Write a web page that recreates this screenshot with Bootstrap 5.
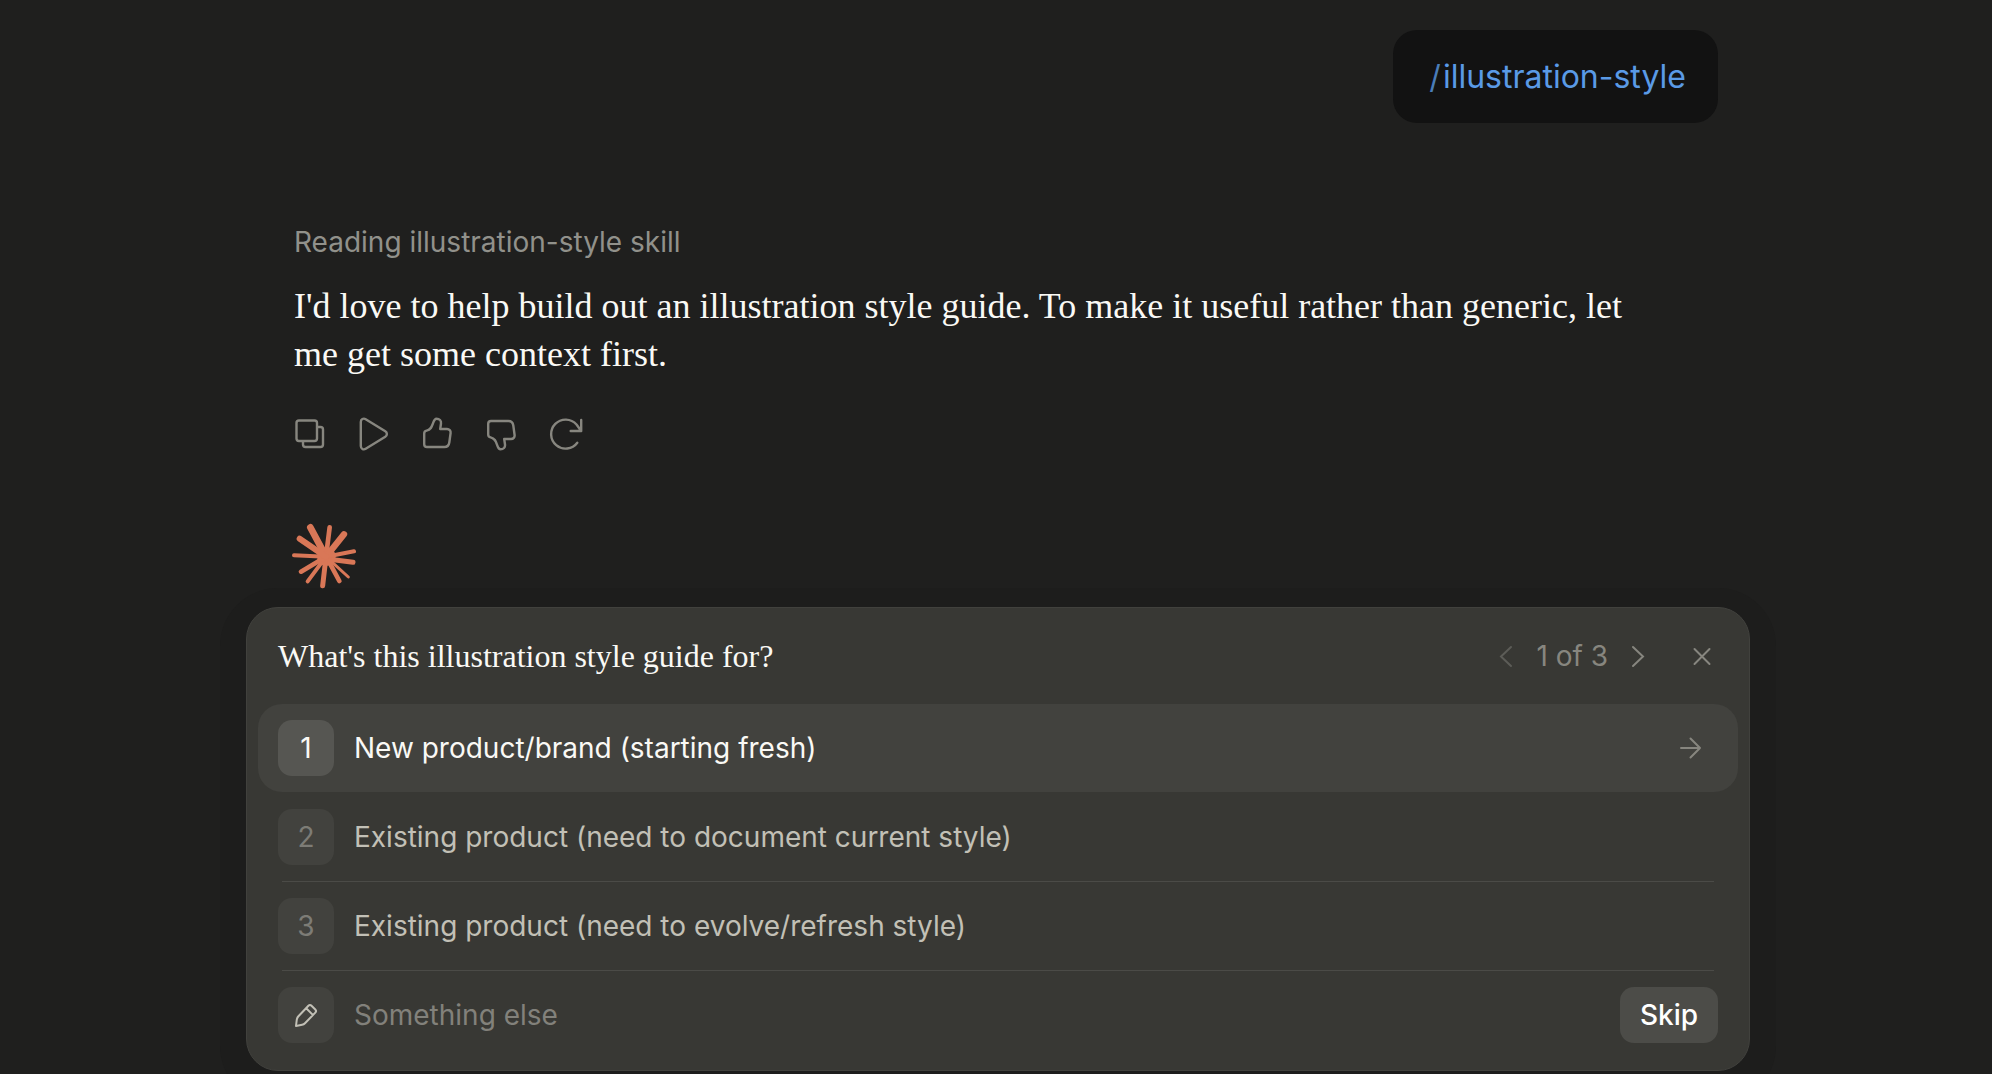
<!DOCTYPE html>
<html lang="en" data-bs-theme="dark">
<head>
<meta charset="utf-8">
<meta name="viewport" content="width=device-width, initial-scale=1">
<title>Illustration style</title>
<link href="https://cdn.jsdelivr.net/npm/bootstrap@5.3.0/dist/css/bootstrap.min.css" rel="stylesheet">
<style>
  body { background: #1f1f1e; font-family: Inter, "Liberation Sans", sans-serif; font-size: 28px; line-height: 40px; }
  .chat-page { padding: 30px 0 3px 4px; }
  .chat-column { max-width: 1504px; }
  .serif { font-family: "Liberation Serif", serif; color: #faf9f5; }
  .thread { padding: 0 32px; z-index: 1; }
  .bubble { background: #121212; border-radius: 24px; padding: 23px 32px 22px 36px; font-size: 32px; line-height: 48px; }
  .bubble a { color: #5a9ae6; }
  .bubble .slash { color: #4a7db9; margin-right: 2px; }
  .reply { padding: 0 64px 0 16px; margin-top: 99px; }
  .status { color: #91918b; margin-bottom: 20px; }
  .answer { font-size: 36px; line-height: 48px; }
  .tool { width: 64px; height: 64px; color: #87867f; }
  .tool svg { stroke-width: 2.4px; }
  .tool svg, .spark { display: block; }
  .spark { margin: 57px 0 0 12px; color: #d97757; }
  .ask { background: #383834; border: 1px solid #41413d; border-radius: 32px; padding: 0 11px 11px; box-shadow: 0 7px 0 26px #1d1d1c; }
  .ask-head { height: 96px; padding: 0 16px 0 20px; }
  .ask-title { font-size: 32px; line-height: 40px; }
  .pager { color: #87867f; }
  .pager-count { padding: 0 10px; }
  .bare { border: 0; padding: 0; background: none; color: #87867f; width: 40px; height: 40px; }
  .bare:disabled { border: 0; color: #5c5c57; opacity: 1; }
  .option { height: 88px; padding: 0 20px; border: 0; border-radius: 24px; background: none; color: #c2c0b6; text-align: left; gap: 20px; }
  .option.picked { background: #42423e; color: #faf9f5; }
  .rule { height: 1px; margin: 0 24px; background: #4b4b47; }
  .rule.blank { background: none; }
  .keycap { width: 56px; height: 56px; border-radius: 14px; background: #42423e; color: #7d7c76; flex: none; }
  .picked .keycap { background: #565652; color: #faf9f5; }
  .other, .other:focus { background: none; border: 0; padding: 0; box-shadow: none; font-size: 28px; line-height: 40px; color: #faf9f5; }
  .other::placeholder { color: #82817b; }
  .skip, .skip:hover { background: #4c4c48; color: #fff; border: 0; border-radius: 14px; height: 56px; padding: 0 20px; font-size: 28px; line-height: 40px; font-weight: 500; }
</style>
<script src="https://cdn.jsdelivr.net/npm/bootstrap@5.3.0/dist/js/bootstrap.bundle.min.js"></script>
</head>
<body>
<div class="chat-page d-flex flex-column min-vh-100">
  <div class="chat-column w-100 mx-auto flex-grow-1 d-flex flex-column">
    <main class="thread position-relative">
      <div class="d-flex justify-content-end">
        <div class="bubble"><a href="#" class="text-decoration-none"><span class="slash">/</span>illustration-style</a></div>
      </div>
      <div class="reply">
        <p class="status">Reading illustration-style skill</p>
        <p class="answer serif mb-0">I'd love to help build out an illustration style guide. To make it useful rather than generic, let me get some context first.</p>
      </div>
      <div class="d-flex mt-4" role="toolbar" aria-label="Message actions">
        <button type="button" class="tool btn p-0 border-0 d-flex align-items-center justify-content-center" aria-label="Copy">
          <svg width="40" height="40" fill="none" stroke="currentColor" stroke-linejoin="round"><rect x="6.5" y="6.5" width="20.5" height="20.5" rx="2.5"/><path d="M27 13h3.500a2.500 2.500 0 0 1 2.500 2.500v15a2.500 2.500 0 0 1-2.500 2.500h-15a2.500 2.500 0 0 1-2.500-2.500V27"/></svg>
        </button>
        <button type="button" class="tool btn p-0 border-0 d-flex align-items-center justify-content-center" aria-label="Play">
          <svg width="40" height="40" fill="none" stroke="currentColor" stroke-linejoin="round"><path d="M6.800 8v24c0 2.700 2.600 4.200 4.900 2.800l19.600-12c2.100-1.300 2.100-4.300 0-5.600L11.700 5.200C9.400 3.800 6.800 5.300 6.800 8z"/></svg>
        </button>
        <button type="button" class="tool btn p-0 border-0 d-flex align-items-center justify-content-center" aria-label="Good response">
          <svg width="40" height="40" fill="none" stroke="currentColor" stroke-linejoin="round"><path d="M6.200 19.500c0-1.500.9-2.600 2.400-2.900 4.200-.9 5.200-3.800 6.400-7.200.9-2.500 1.300-4.700 3.500-4.700 3 0 4.900 2 4.500 4.800L22.200 15H29c2.300 0 3.900 1.800 3.600 4l-1.300 9.500c-.4 2.700-2.200 4.500-4.800 4.500H9a2.800 2.800 0 0 1-2.800-2.800z"/></svg>
        </button>
        <button type="button" class="tool btn p-0 border-0 d-flex align-items-center justify-content-center" aria-label="Bad response">
          <svg width="40" height="40" fill="none" stroke="currentColor" stroke-linejoin="round"><path transform="matrix(1 0 0 -1 0 40)" d="M6.200 19.500c0-1.500.9-2.600 2.400-2.900 4.200-.9 5.200-3.800 6.400-7.200.9-2.500 1.300-4.700 3.500-4.700 3 0 4.900 2 4.500 4.800L22.200 15H29c2.300 0 3.900 1.800 3.600 4l-1.300 9.500c-.4 2.700-2.200 4.500-4.800 4.500H9a2.800 2.800 0 0 1-2.800-2.800z"/></svg>
        </button>
        <button type="button" class="tool btn p-0 border-0 d-flex align-items-center justify-content-center" aria-label="Retry">
          <svg width="40" height="40" fill="none" stroke="currentColor" stroke-linejoin="round" stroke-linecap="round"><path d="M31.300 28.700A14.500 14.500 0 1 1 30.500 10.500L35.200 17M35.200 6v11H24.700"/></svg>
        </button>
      </div>
      <svg class="spark" width="66" height="66" viewBox="60 69 198 198" stroke="currentColor" stroke-linecap="round" aria-hidden="true">
        <circle cx="169" cy="170" r="28" fill="currentColor" stroke="none"/>
        <path stroke-width="20" d="M168 170L121 82"/><path stroke-width="14" d="M168 170L179 82"/><path stroke-width="19" d="M168 170L222 103"/>
        <path stroke-width="12" d="M168 170L252 154"/><path stroke-width="15" d="M190 179L249 187"/><path stroke-width="9" d="M168 170L235 231"/>
        <path stroke-width="14" d="M172 176L208 243"/><path stroke-width="15" d="M168 170L158 257"/><path stroke-width="12" d="M168 170L113 244"/>
        <path stroke-width="14" d="M168 170L93 215"/><path stroke-width="12" d="M168 170L72 166"/><path stroke-width="18" d="M168 170L89 116"/>
      </svg>
    </main>
    <section class="ask mt-auto" aria-labelledby="ask-title">
      <header class="ask-head d-flex align-items-center justify-content-between">
        <h2 class="ask-title serif fw-normal mb-0" id="ask-title">What's this illustration style guide for?</h2>
        <div class="pager d-flex align-items-center">
          <button type="button" class="bare btn d-flex align-items-center justify-content-center" disabled aria-label="Previous question">
            <svg width="24" height="24" fill="none" stroke="currentColor" stroke-width="2" stroke-linecap="round"><path d="M17 3L7 12.500 17 22"/></svg>
          </button>
          <span class="pager-count">1 of 3</span>
          <button type="button" class="bare btn d-flex align-items-center justify-content-center" aria-label="Next question">
            <svg width="24" height="24" fill="none" stroke="currentColor" stroke-width="2" stroke-linecap="round"><path d="M7 3l10 9.500L7 22"/></svg>
          </button>
          <button type="button" class="bare btn ms-4 d-flex align-items-center justify-content-center" aria-label="Close">
            <svg width="24" height="24" fill="none" stroke="currentColor" stroke-width="2" stroke-linecap="round"><path d="M4.500 5l15 15M19.500 5l-15 15"/></svg>
          </button>
        </div>
      </header>
      <button type="button" class="option picked w-100 d-flex align-items-center">
        <span class="keycap d-flex align-items-center justify-content-center">1</span>
        <span class="flex-grow-1">New product/brand (starting fresh)</span>
        <svg class="me-3" width="24" height="24" fill="none" stroke="#87867f" stroke-width="2" stroke-linecap="round" stroke-linejoin="round" aria-hidden="true"><path d="M3 12h19M12.500 2.500L22 12l-9.500 9.500"/></svg>
      </button>
      <div class="rule blank"></div>
      <button type="button" class="option w-100 d-flex align-items-center">
        <span class="keycap d-flex align-items-center justify-content-center">2</span>
        <span>Existing product (need to document current style)</span>
      </button>
      <div class="rule"></div>
      <button type="button" class="option w-100 d-flex align-items-center">
        <span class="keycap d-flex align-items-center justify-content-center">3</span>
        <span>Existing product (need to evolve/refresh style)</span>
      </button>
      <div class="rule"></div>
      <div class="option d-flex align-items-center">
        <label class="keycap d-flex align-items-center justify-content-center" for="other" aria-label="Something else">
          <svg width="28" height="28" fill="none" stroke="#c2c0b6" stroke-width="2" stroke-linejoin="round" aria-hidden="true"><path d="M4 25l.8-6.500c.2-1.200.6-2.100 1.400-3L16.400 4.700c.9-.9 2.200-.9 3.100 0l3.800 3.800c.9.9.9 2.200 0 3.100L13 22.300c-.8.8-1.700 1.300-2.900 1.500zM14.200 7.300l6.600 6.600"/></svg>
        </label>
        <input type="text" class="other form-control" id="other" placeholder="Something else">
        <button type="button" class="skip btn">Skip</button>
      </div>
    </section>
  </div>
</div>
</body>
</html>
